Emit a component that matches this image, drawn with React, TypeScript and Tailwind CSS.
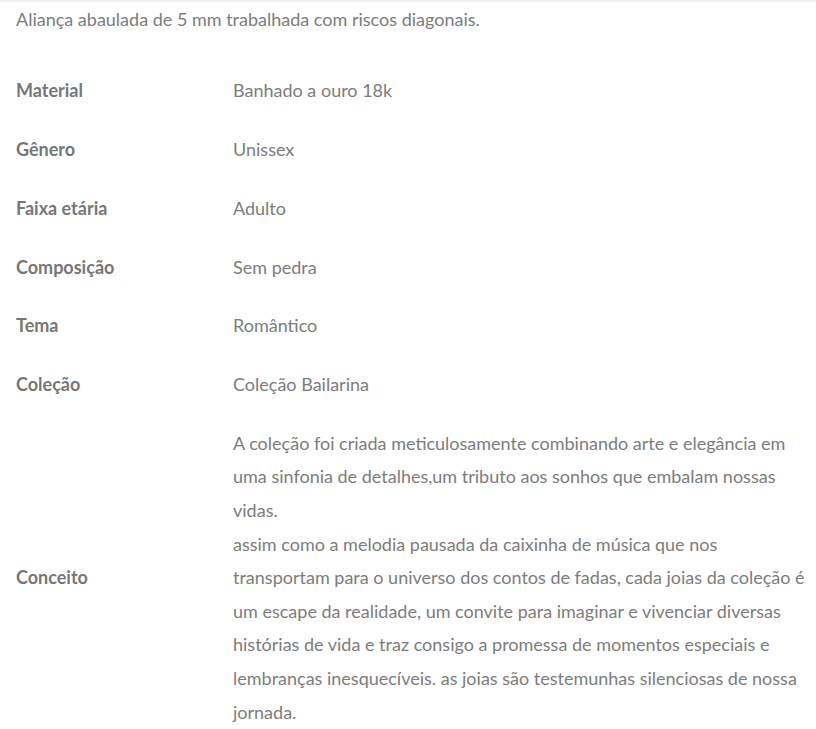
const specs: Array<{ label: string; value: string }> = [
  { label: "Material", value: "Banhado a ouro 18k" },
  { label: "Gênero", value: "Unissex" },
  { label: "Faixa etária", value: "Adulto" },
  { label: "Composição", value: "Sem pedra" },
  { label: "Tema", value: "Romântico" },
  { label: "Coleção", value: "Coleção Bailarina" },
];

const App = () => {
  return (
    <div
      className="min-h-screen bg-white text-[18px] text-[#7d7d7d] border-t-2 border-[#f0f0f0]"
      style={{ fontFamily: "Lato, 'Open Sans', sans-serif" }}
    >
      <p className="px-4 leading-[33.6px] pt-[1px] mb-[25px]">
        Aliança abaulada de 5 mm trabalhada com riscos diagonais.
      </p>

      <table className="w-full border-collapse">
        <tbody>
          {specs.map((s) => (
            <tr key={s.label}>
              <th className="w-[233px] pl-4 py-[12.6px] text-left align-middle font-bold text-[#777] leading-[33.6px]">
                {s.label}
              </th>
              <td className="py-[12.6px] pr-1 leading-[33.6px]">{s.value}</td>
            </tr>
          ))}
          <tr>
            <th className="w-[233px] pl-4 py-[12.6px] text-left align-middle font-bold text-[#777] leading-[33.6px]">
              Conceito
            </th>
            <td className="py-[12.6px] pr-1 leading-[33.6px]">
              A coleção foi criada meticulosamente combinando arte e elegância em
              uma sinfonia de detalhes,um tributo aos sonhos que embalam nossas
              vidas.
              <br />
              assim como a melodia pausada da caixinha de música que nos
              transportam para o universo dos contos de fadas, cada joias da
              coleção é um escape da realidade, um convite para imaginar e
              vivenciar diversas histórias de vida e traz consigo a promessa de
              momentos especiais e lembranças inesquecíveis. as joias são
              testemunhas silenciosas de nossa jornada.
            </td>
          </tr>
        </tbody>
      </table>
    </div>
  );
};

export default App;
